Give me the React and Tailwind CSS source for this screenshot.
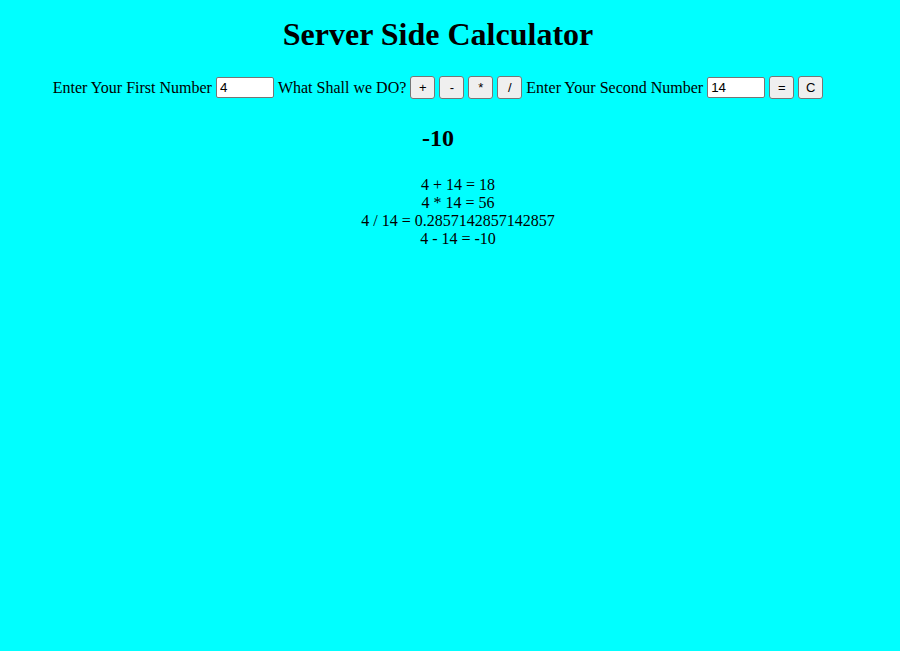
export default function App() {
  const inputCls =
    "w-[58px] h-[21px] bg-white border border-[#767676] rounded-[2px] px-[3px] text-[13.33px] text-black outline-none font-['Liberation_Sans',Arial,sans-serif]"
  const btnCls =
    "w-[25px] h-[23px] bg-[#efefef] border border-[#767676] rounded-[3px] text-[13px] text-black flex items-center justify-center font-['Liberation_Sans',Arial,sans-serif]"
  const ops = ["+", "-", "*", "/"]
  const history = ["4 + 14 = 18", "4 * 14 = 56", "4 / 14 = 0.2857142857142857", "4 - 14 = -10"]

  return (
    <div className="min-h-screen w-full bg-[#00ffff] text-black font-['Liberation_Serif',serif]">
      <div className="w-[876px] flex flex-col items-center">
        <h1 className="mt-[16px] text-[32px] leading-[37px] font-bold">Server Side Calculator</h1>

        <div className="mt-[23px] flex items-center gap-[4px] text-[16px] leading-[23px]">
          <span>Enter Your First Number</span>
          <input className={inputCls} defaultValue="4" />
          <span>What Shall we DO?</span>
          {ops.map((op) => (
            <button key={op} className={btnCls}>
              {op}
            </button>
          ))}
          <span>Enter Your Second Number</span>
          <input className={inputCls} defaultValue="14" />
          <button className={btnCls}>=</button>
          <button className={btnCls}>C</button>
        </div>

        <h2 className="mt-[25px] text-[24px] leading-[28px] font-bold">-10</h2>

        <ul className="mt-[24px] pl-[40px] flex flex-col items-center text-[16px] leading-[18px]">
          {history.map((line) => (
            <li key={line}>{line}</li>
          ))}
        </ul>
      </div>
    </div>
  )
}
